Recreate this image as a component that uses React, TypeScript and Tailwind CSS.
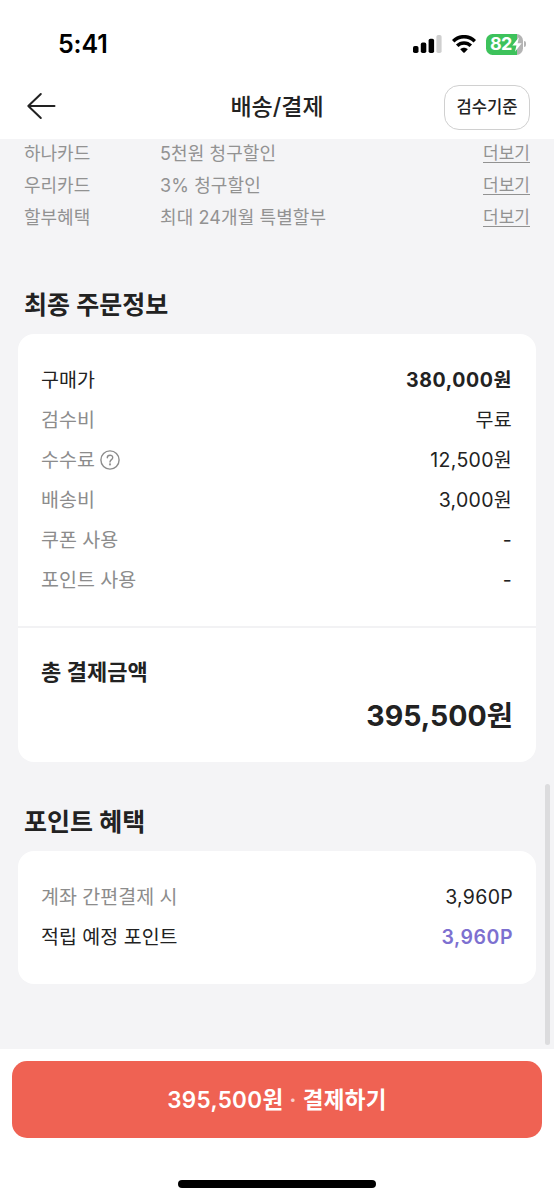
import { ReactNode } from 'react';

const cardBenefits = [
  { name: '하나카드', desc: '5천원 청구할인' },
  { name: '우리카드', desc: '3% 청구할인' },
  { name: '할부혜택', desc: '최대 24개월 특별할부' },
];

const orderRows = [
  { label: '검수비', value: '무료' },
  { label: '수수료', value: '12,500원', help: true },
  { label: '배송비', value: '3,000원' },
  { label: '쿠폰 사용', value: '-' },
  { label: '포인트 사용', value: '-' },
];

function StatusBar() {
  return (
    <div className="flex h-[75px] shrink-0 items-center justify-between pt-[13px] pr-[28px] pl-[58px]">
      <span className="text-[25px] leading-none font-semibold tracking-[-0.1px] text-black">5:41</span>
      <div className="flex items-center">
        <svg width="29" height="18" viewBox="0 0 29 18">
          <rect x="0" y="11" width="5.5" height="7" rx="1.8" fill="#000" />
          <rect x="7.8" y="7.6" width="5.5" height="10.4" rx="1.8" fill="#000" />
          <rect x="15.6" y="3.8" width="5.5" height="14.2" rx="1.8" fill="#000" />
          <rect x="23.4" y="0" width="5.2" height="18" rx="1.8" fill="#cfcfcf" />
        </svg>
        <svg className="ml-[10px]" width="24" height="18" viewBox="0 0 24 18">
          <g fill="none" stroke="#000" strokeWidth="3.5">
            <path d="M1.2 6.3C7.3 .1 16.7 .1 22.8 6.3" />
            <path d="M5.2 10.8C9 7 15 7 18.8 10.8" />
          </g>
          <path d="M8.2 14.2C10.3 12.2 13.7 12.2 15.8 14.2L12.7 17.4Q12 18 11.3 17.4Z" fill="#000" />
        </svg>
        <div className="ml-[10px] flex h-[21px] w-[37px] items-center rounded-[6.5px] bg-linear-to-r from-[#3dc25b] from-84% to-[#b4b4b4] to-84% pl-[4px] text-[18px] leading-none font-bold tracking-[-0.8px] text-white">
          82
          <svg className="ml-px" width="10" height="15" viewBox="0 0 9 13">
            <path d="M6.3 0L.3 7.4H4L2.7 13L8.7 5.4H5Z" fill="#fff" />
          </svg>
        </div>
        <div className="ml-[1px] h-[6px] w-[2px] rounded-r-full bg-[#b4b4b4]" />
      </div>
    </div>
  );
}

function Header() {
  return (
    <header className="grid h-[64px] shrink-0 grid-cols-[1fr_auto_1fr] items-center px-6">
      <svg className="-mt-0.5" width="34" height="28" viewBox="0 0 34 28" fill="none" stroke="#222" strokeWidth="2" strokeLinecap="round" strokeLinejoin="round">
        <path d="M16.8 2L4.3 14L16.8 26M4.3 14H30.5" />
      </svg>
      <h1 className="text-[23px] leading-none font-medium text-[#222]">배송/결제</h1>
      <button className="h-[45px] w-[86px] justify-self-end rounded-[15px] border border-[#d0d0d0] text-[16.6px] font-medium text-[#222]">
        검수기준
      </button>
    </header>
  );
}

function Row({ label, children }: { label: ReactNode; children: ReactNode }) {
  return (
    <div className="flex h-10 items-center justify-between">
      <div className="flex items-center gap-[5px] text-[#8c8c8c]">{label}</div>
      <div className="tracking-[0.3px]">{children}</div>
    </div>
  );
}

function HelpIcon() {
  return (
    <svg className="-mt-0.5" width="20" height="20" viewBox="0 0 20 20" fill="none" stroke="#8c8c8c" strokeWidth="1.4" strokeLinecap="round">
      <circle cx="10" cy="10" r="9.1" />
      <path d="M7.3 7.8C7.3 4.3 12.8 4.4 12.7 7.7C12.6 9.6 10 9.7 10 12" />
      <circle cx="10" cy="14.4" r=".4" fill="#8c8c8c" />
    </svg>
  );
}

export default function App() {
  return (
    <div className="flex h-[1200px] w-[554px] flex-col overflow-hidden bg-white font-[Inter,'Noto_Sans_CJK_KR',sans-serif] text-[#222]">
      <StatusBar />
      <Header />

      <main className="relative h-[910px] shrink-0 overflow-hidden bg-[#f4f4f6] px-[18px]">
        <div className="-mt-[2px] px-1.5 text-[18px] text-[#929292]">
          {cardBenefits.map((b) => (
            <div key={b.name} className="flex h-8 items-center">
              <span className="w-[136px]">{b.name}</span>
              <span className="flex-1 tracking-[0.1px]">{b.desc}</span>
              <span className="border-b border-[#929292] text-[17px] leading-[18px]">더보기</span>
            </div>
          ))}
        </div>

        <h2 className="mt-[56px] px-1.5 text-[25px] leading-8 font-semibold">최종 주문정보</h2>
        <section className="mt-[13px] h-[428px] rounded-[16px] bg-white text-[19.5px]">
          <div className="h-[292px] pt-[27px] pr-6 pl-[23px]">
            <Row label={<span className="text-[#222]">구매가</span>}>
              <span className="font-bold tracking-[0.6px]">380,000원</span>
            </Row>
            {orderRows.map((r) => (
              <Row key={r.label} label={<>{r.label}{r.help && <HelpIcon />}</>}>
                {r.value}
              </Row>
            ))}
          </div>
          <div className="border-t-2 border-[#f2f2f4] pt-[28px] pr-[23px] pl-[23px]">
            <p className="text-[22px] leading-8 font-semibold">총 결제금액</p>
            <p className="mt-[10px] text-right text-[28.5px] leading-[36px] font-bold">395,500원</p>
          </div>
        </section>

        <h2 className="mt-[44px] px-1.5 text-[25px] leading-8 font-semibold">포인트 혜택</h2>
        <section className="mt-[13px] h-[133px] rounded-[16px] bg-white pt-[27px] pr-[23px] pl-[23px] text-[19.5px]">
          <Row label="계좌 간편결제 시">3,960P</Row>
          <Row label={<span className="text-[#222]">적립 예정 포인트</span>}>
            <span className="font-semibold tracking-[0.5px] text-[#7d70d0]">3,960P</span>
          </Row>
        </section>

        {/* scroll indicator */}
        <div className="absolute top-[645px] right-[4px] h-[261px] w-[5px] rounded-full bg-[#dcdcde]" />
      </main>

      <footer className="flex flex-1 flex-col items-center px-3 pt-3">
        <button className="h-[77px] w-full rounded-[15px] bg-[#ef6253] pt-px text-[22.5px] font-semibold tracking-[0.3px] text-white">
          395,500원 <span className="opacity-70">·</span> 결제하기
        </button>
        <div className="mt-[42px] h-2 w-[198px] rounded-full bg-black" />
      </footer>
    </div>
  );
}
